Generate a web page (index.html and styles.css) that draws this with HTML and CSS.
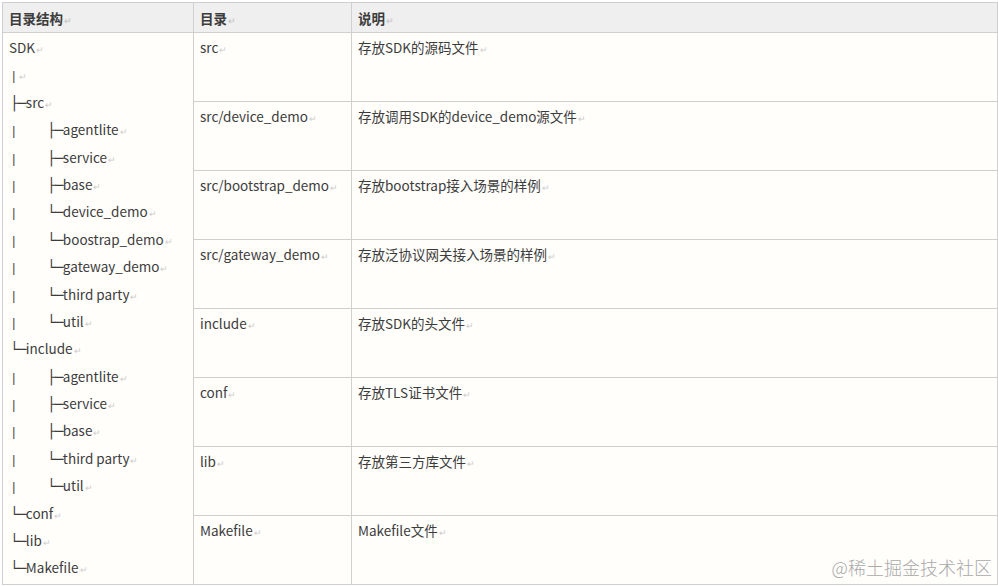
FILE: index.html
```html
<!DOCTYPE html>
<html lang="zh">
<head>
<meta charset="utf-8">
<link rel="stylesheet" href="styles.css">
</head>
<body>
<div class="page">
<table class="dir-table">
  <colgroup>
    <col class="c1"><col class="c2"><col class="c3">
  </colgroup>
  <thead>
    <tr class="head-row"><th>目录结构<span class="rm">↵</span></th><th>目录<span class="rm">↵</span></th><th>说明<span class="rm">↵</span></th></tr>
  </thead>
  <tbody>
    <tr>
      <td rowspan="8" class="tree">
        <div class="ln">SDK<span class="rm">↵</span></div>
        <div class="ln"><span class="bar">|</span><span class="rm">↵</span></div>
        <div class="ln"><span class="br">├─</span>src<span class="rm">↵</span></div>
        <div class="ln"><span class="bar in">|</span><span class="br">├─</span>agentlite<span class="rm">↵</span></div>
        <div class="ln"><span class="bar in">|</span><span class="br">├─</span>service<span class="rm">↵</span></div>
        <div class="ln"><span class="bar in">|</span><span class="br">├─</span>base<span class="rm">↵</span></div>
        <div class="ln"><span class="bar in">|</span><span class="br">└─</span>device_demo<span class="rm">↵</span></div>
        <div class="ln"><span class="bar in">|</span><span class="br">└─</span>boostrap_demo<span class="rm">↵</span></div>
        <div class="ln"><span class="bar in">|</span><span class="br">└─</span>gateway_demo<span class="rm">↵</span></div>
        <div class="ln"><span class="bar in">|</span><span class="br">└─</span>third party<span class="rm">↵</span></div>
        <div class="ln"><span class="bar in">|</span><span class="br">└─</span>util<span class="rm">↵</span></div>
        <div class="ln"><span class="br">└─</span>include<span class="rm">↵</span></div>
        <div class="ln"><span class="bar in">|</span><span class="br">├─</span>agentlite<span class="rm">↵</span></div>
        <div class="ln"><span class="bar in">|</span><span class="br">├─</span>service<span class="rm">↵</span></div>
        <div class="ln"><span class="bar in">|</span><span class="br">├─</span>base<span class="rm">↵</span></div>
        <div class="ln"><span class="bar in">|</span><span class="br">└─</span>third party<span class="rm">↵</span></div>
        <div class="ln"><span class="bar in">|</span><span class="br">└─</span>util<span class="rm">↵</span></div>
        <div class="ln"><span class="br">└─</span>conf<span class="rm">↵</span></div>
        <div class="ln"><span class="br">└─</span>lib<span class="rm">↵</span></div>
        <div class="ln"><span class="br">└─</span>Makefile<span class="rm">↵</span></div>
      </td>
      <td>src<span class="rm">↵</span></td>
      <td>存放SDK的源码文件<span class="rm">↵</span></td>
    </tr>
    <tr><td>src/device_demo<span class="rm">↵</span></td><td>存放调用SDK的device_demo源文件<span class="rm">↵</span></td></tr>
    <tr><td>src/bootstrap_demo<span class="rm">↵</span></td><td>存放bootstrap接入场景的样例<span class="rm">↵</span></td></tr>
    <tr><td>src/gateway_demo<span class="rm">↵</span></td><td>存放泛协议网关接入场景的样例<span class="rm">↵</span></td></tr>
    <tr><td>include<span class="rm">↵</span></td><td>存放SDK的头文件<span class="rm">↵</span></td></tr>
    <tr><td>conf<span class="rm">↵</span></td><td>存放TLS证书文件<span class="rm">↵</span></td></tr>
    <tr><td>lib<span class="rm">↵</span></td><td>存放第三方库文件<span class="rm">↵</span></td></tr>
    <tr><td>Makefile<span class="rm">↵</span></td><td>Makefile文件<span class="rm">↵</span></td></tr>
  </tbody>
</table>
<div class="watermark">@稀土掘金技术社区</div>
</div>
</body>
</html>
```
FILE: styles.css
```css
html, body {
  margin: 0;
  padding: 0;
  background: #ffffff;
}
.page {
  position: relative;
  width: 998px;
  height: 586px;
  padding: 2px 0 0 2px;
  box-sizing: border-box;
  font-family: "Noto Sans CJK SC", "Noto Sans", sans-serif;
  font-size: 13.5px;
  color: #3c3c3c;
}
.dir-table {
  border-collapse: collapse;
  table-layout: fixed;
  width: 995px;
  background: #fffefb;
}
.c1 { width: 191px; }
.c2 { width: 158px; }
.c3 { width: 646px; }
.dir-table th,
.dir-table td {
  border: 1px solid #cfcfcf;
  padding: 0 6px;
  text-align: left;
  vertical-align: top;
}
.head-row {
  height: 30px;
}
.dir-table th {
  background: #efefef;
  font-weight: bold;
  height: 26px;
  line-height: 20px;
  padding: 0 6px;
  vertical-align: middle;
}
.dir-table td {
  height: 69px;
  line-height: 27.4px;
  padding-top: 1px;
  box-sizing: border-box;
}
.ln {
  height: 27.4px;
  white-space: nowrap;
}
.bar {
  display: inline-block;
  width: 6px;
  padding-left: 3px;
  font-family: "Liberation Sans", sans-serif;
  color: #555555;
}
.bar.in {
  width: 34px;
}
.br {
  font-family: "DejaVu Sans Mono", monospace;
  font-size: 14px;
  letter-spacing: -0.5px;
  margin-left: 1px;
}
.rm {
  font-size: 9px;
  line-height: 1;
  color: #cccccc;
  margin-left: 1px;
}
.watermark {
  position: absolute;
  right: 6px;
  bottom: 6px;
  font-size: 18px;
  color: #a9a9a9;
  font-family: "Noto Sans CJK SC", sans-serif;
  font-weight: 300;
}
```
